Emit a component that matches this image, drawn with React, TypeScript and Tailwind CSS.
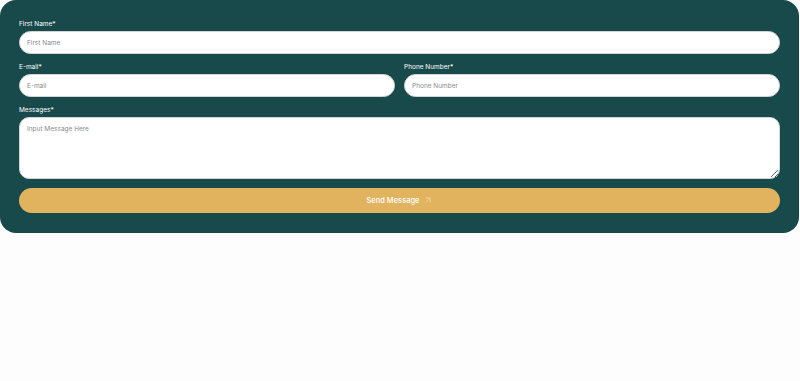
import { FiArrowUpRight } from 'react-icons/fi';

function Field({ label, placeholder }: { label: string; placeholder: string }) {
  return (
    <div className="flex flex-col gap-[3px] flex-1 min-w-0">
      <label className="text-[6.5px] leading-[8px] text-white">{label}</label>
      <input
        placeholder={placeholder}
        className="h-[23px] w-full rounded-full bg-white border border-[#d4d4d4] px-[7px] text-[6.5px] text-[#444] placeholder:text-[#8a8a8a] outline-none"
      />
    </div>
  );
}

export default function App() {
  return (
    <div className="w-[800px] h-[381px] bg-[#fdfdfd] font-['Inter',sans-serif]">
      <form className="w-[799px] rounded-[16px] bg-[#184a4c] px-[19px] pt-[20px] pb-[20px] flex flex-col gap-[9px]">
        <Field label="First Name*" placeholder="First Name" />
        <div className="flex gap-[9px]">
          <Field label="E-mail*" placeholder="E-mail" />
          <Field label="Phone Number*" placeholder="Phone Number" />
        </div>
        <div className="flex flex-col gap-[3px]">
          <label className="text-[6.5px] leading-[8px] text-white">Messages*</label>
          <textarea
            placeholder="Input Message Here"
            className="block h-[62px] w-full rounded-[10px] bg-white border border-[#d4d4d4] px-[7px] py-[7px] text-[6.5px] text-[#444] placeholder:text-[#8a8a8a] outline-none"
          />
        </div>
        <button
          type="button"
          className="h-[25px] w-full rounded-full bg-[#e2b35e] text-white text-[7.5px] font-medium flex items-center justify-center gap-[3px]"
        >
          Send Message
          <FiArrowUpRight className="w-[10px] h-[10px] stroke-1 -mt-[2px]" />
        </button>
      </form>
    </div>
  );
}
